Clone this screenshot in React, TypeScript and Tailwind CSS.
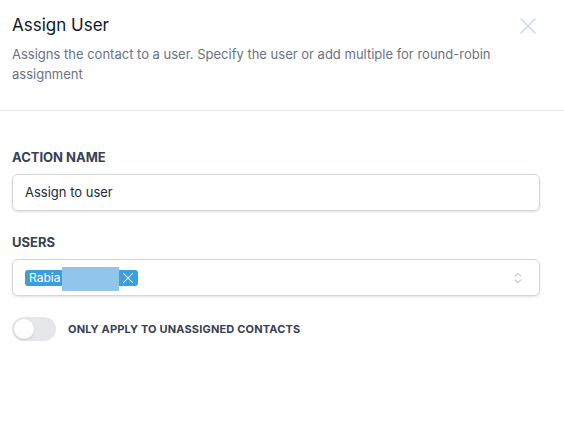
import { X, ChevronsUpDown } from "lucide-react";

export default function App() {
  return (
    <div className="w-[564px] h-[436px] bg-white font-['Inter',sans-serif] overflow-hidden">
      <div className="px-3 pt-[12px] pb-[26px] border-b border-gray-200">
        <div className="flex items-start justify-between">
          <h2 className="text-[17px] leading-[26px] text-gray-900">Assign User</h2>
          <button className="mr-[10px] text-indigo-200" aria-label="Close">
            <X className="w-[28px] h-[28px]" strokeWidth={1.2} />
          </button>
        </div>
        <p className="mt-[4px] text-[13px] leading-[20px] text-gray-500 pr-6">
          Assigns the contact to a user. Specify the user or add multiple for round-robin assignment
        </p>
      </div>

      <div className="px-3 pt-[36px] w-[552px]">
        <label className="block text-[13px] leading-[20px] font-bold text-gray-700">ACTION NAME</label>
        <div className="mt-[7px] h-[37px] flex items-center rounded-md border border-gray-300 shadow-sm px-3">
          <span className="text-[13px] text-gray-800">Assign to user</span>
        </div>

        <label className="mt-[21px] block text-[13px] leading-[20px] font-bold text-gray-700">USERS</label>
        <div className="mt-[7px] h-[37px] flex items-center justify-between rounded-md border border-gray-300 shadow-sm pl-[12px] pr-[14px]">
          <span className="relative flex items-center h-[16px] rounded-[3px] bg-[#3b9ede] text-white text-[12px] pl-[4px] pr-[1px]">
            <span className="leading-[16px]">Rabia</span>
            <span className="w-[56px]" />
            <span className="absolute left-[37px] top-[-3px] w-[57px] h-[24px] bg-[#91c6ea]" />
            <X className="w-[18px] h-[18px] ml-[3px] -my-[1px]" strokeWidth={1.4} />
          </span>
          <ChevronsUpDown className="w-[14px] h-[14px] text-gray-400" strokeWidth={1.5} />
        </div>

        <div className="mt-[21px] flex items-center gap-3">
          <span className="relative w-[44px] h-[24px] rounded-full bg-gray-200">
            <span className="absolute left-[2px] top-[2px] w-[20px] h-[20px] rounded-full bg-white shadow" />
          </span>
          <span className="text-[11px] font-bold text-gray-700 tracking-[0.015em]">
            ONLY APPLY TO UNASSIGNED CONTACTS
          </span>
        </div>
      </div>
    </div>
  );
}
